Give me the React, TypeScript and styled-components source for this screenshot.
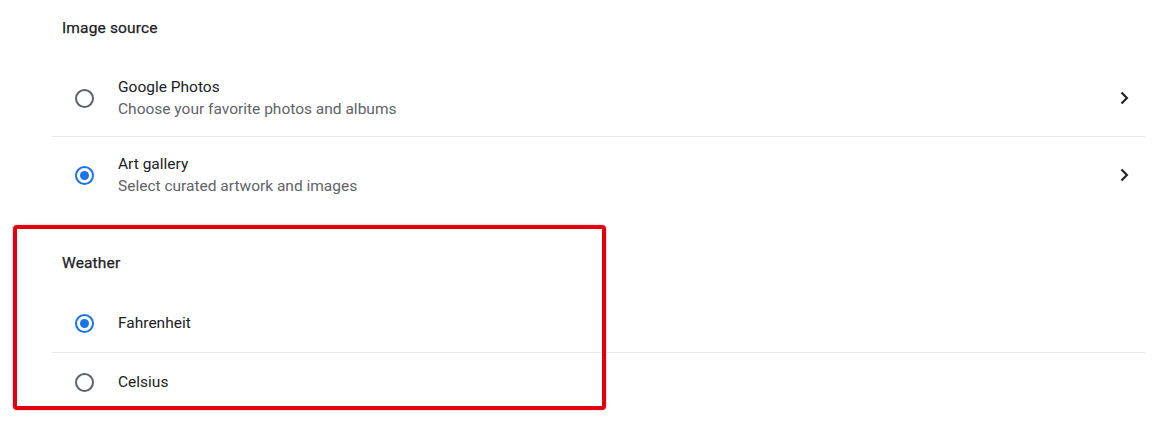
import styled, { createGlobalStyle } from 'styled-components'

const GlobalStyle = createGlobalStyle`
  body {
    margin: 0;
    background: #ffffff;
    font-family: Roboto, "Liberation Sans", Arial, sans-serif;
    -webkit-font-smoothing: antialiased;
  }
`

const Page = styled.div`
  padding: 0 28px 0 52px;
  width: 1173px;
  box-sizing: border-box;
`

const Section = styled.section<{ $gap?: number }>`
  position: relative;
  margin-top: ${p => p.$gap ?? 0}px;
`

const SectionTitle = styled.h2<{ $top: number; $bottom: number }>`
  margin: 0;
  padding: ${p => p.$top}px 0 ${p => p.$bottom}px 10px;
  font-size: 15.5px;
  line-height: 20px;
  font-weight: 400;
  letter-spacing: 0.15px;
  color: #202124;
  -webkit-text-stroke: 0.25px #202124;
`

const Row = styled.div<{ $height: number }>`
  display: flex;
  align-items: center;
  height: ${p => p.$height}px;
  padding: 0 11px 0 23px;
  & + & {
    border-top: 1px solid #e8eaed;
  }
`

const Radio = styled.span<{ $checked?: boolean }>`
  flex: none;
  width: 19px;
  height: 19px;
  box-sizing: border-box;
  border-radius: 50%;
  border: 2px solid ${p => (p.$checked ? '#1a73e8' : '#5f6368')};
  display: flex;
  align-items: center;
  justify-content: center;
  &::after {
    content: '';
    display: ${p => (p.$checked ? 'block' : 'none')};
    width: 9px;
    height: 9px;
    border-radius: 50%;
    background: #1a73e8;
  }
`

const Texts = styled.div`
  flex: 1;
  display: flex;
  flex-direction: column;
  gap: 2px;
  margin-left: 24px;
`

const Label = styled.div`
  font-size: 15.5px;
  line-height: 20px;
  color: #202124;
`

const Sub = styled.div`
  font-size: 15.5px;
  line-height: 20px;
  color: #5f6368;
`

const Chevron = styled.svg`
  flex: none;
  width: 20px;
  height: 20px;
  color: #202124;
`

// red annotation frame drawn over the weather block
const Highlight = styled.div`
  position: absolute;
  left: -39px;
  top: -4px;
  width: 593px;
  height: 185px;
  box-sizing: border-box;
  border: 4px solid #e2000c;
  border-radius: 4px;
  box-shadow: 0 0 2px rgba(226, 0, 12, 0.4);
  pointer-events: none;
`

interface IOption {
  label: string
  sub?: string
  checked?: boolean
  arrow?: boolean
  height: number
}

function Option({ label, sub, checked, arrow, height }: IOption) {
  return (
    <Row $height={height}>
      <Radio $checked={checked} />
      <Texts>
        <Label>{label}</Label>
        {sub && <Sub>{sub}</Sub>}
      </Texts>
      {arrow && (
        <Chevron viewBox="0 0 24 24">
          <path
            d="M9 5.5l6.5 6.5L9 18.5"
            fill="none"
            stroke="currentColor"
            strokeWidth="2.6"
          />
        </Chevron>
      )}
    </Row>
  )
}

export default function App() {
  return (
    <>
      <GlobalStyle />
      <Page>
        <Section>
          <SectionTitle $top={18} $bottom={22}>
            Image source
          </SectionTitle>
          <Option
            height={76}
            label="Google Photos"
            sub="Choose your favorite photos and albums"
            arrow
          />
          <Option
            height={76}
            label="Art gallery"
            sub="Select curated artwork and images"
            checked
            arrow
          />
        </Section>
        <Section $gap={16}>
          <SectionTitle $top={24} $bottom={21}>
            Weather
          </SectionTitle>
          <Option height={58} label="Fahrenheit" checked />
          <Option height={58} label="Celsius" />
          <Highlight />
        </Section>
      </Page>
    </>
  )
}
